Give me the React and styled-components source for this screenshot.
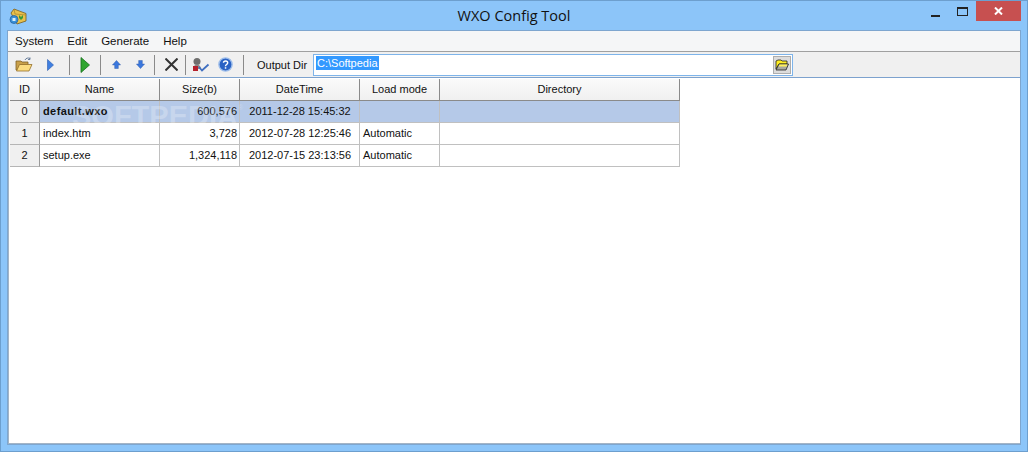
import React from "react";
import styled, { createGlobalStyle } from "styled-components";

const Global = createGlobalStyle`
  html, body { margin: 0; padding: 0; background: #8cc4f8; }
  body { font-family: "Liberation Sans", Arial, sans-serif; font-size: 11px; color: #111; }
`;

const Win = styled.div`
  box-sizing: border-box;
  width: 1028px;
  height: 452px;
  background: #8cc5f9;
  border: 1px solid #6d9fce;
  display: flex;
  flex-direction: column;
  overflow: hidden;
`;

const TitleBar = styled.div`
  height: 29px;
  flex: none;
  display: grid;
  grid-template-columns: 120px 1fr 120px;
  align-items: start;
`;

const AppIcon = styled.div`
  padding: 7px 0 0 8px;
  line-height: 0;
`;

const Title = styled.div`
  font-family: "Open Sans", sans-serif;
  font-size: 14.5px;
  line-height: 30px;
  text-align: center;
  color: #111;
`;

const Controls = styled.div`
  display: flex;
  justify-content: flex-end;
  padding-right: 6px;
`;

const Ctl = styled.div`
  width: ${(p) => (p.$close ? 45 : 27)}px;
  height: 20px;
  background: ${(p) => (p.$close ? "#c75050" : "transparent")};
  display: flex;
  align-items: center;
  justify-content: center;
  line-height: 0;
`;

const MinGlyph = styled.svg`
  margin-top: 8px;
`;

const Client = styled.div`
  flex: 1;
  margin: 0 6px 6px 6px;
  border: 1px solid #7ea6cf;
  background: #f0f0f0;
  display: flex;
  flex-direction: column;
  min-height: 0;
`;

const MenuBar = styled.div`
  height: 20px;
  flex: none;
  background: #f5f6f7;
  border-bottom: 1px solid #a0a0a0;
  display: flex;
  align-items: center;
  padding-left: 7px;
  gap: 14px;
  font-size: 11.5px;
`;

const ToolBar = styled.div`
  height: 25px;
  flex: none;
  background: #f0f0f0;
  display: flex;
  align-items: center;
  padding-left: 4px;
  border-bottom: 1px solid #7da2ce;
`;

const Tool = styled.div`
  width: ${(p) => p.$w || 24}px;
  height: 22px;
  display: flex;
  align-items: center;
  justify-content: center;
  line-height: 0;
  flex: none;
`;

const Sep = styled.div`
  width: 1px;
  height: 20px;
  background: #8a8a8a;
  flex: none;
  margin: 0 ${(p) => p.$r ?? 3}px 0 ${(p) => p.$l ?? 3}px;
`;

const DirLabel = styled.div`
  margin-left: 13px;
  width: 56px;
  flex: none;
`;

const DirBox = styled.div`
  box-sizing: border-box;
  width: 480px;
  height: 22px;
  background: #fff;
  border: 1px solid #7eb4ea;
  display: flex;
  align-items: center;
  justify-content: space-between;
  padding: 0 1px 0 2px;
`;

const Selected = styled.span`
  background: #3399ff;
  color: #fff;
  font-size: 11px;
  line-height: 14px;
  margin-top: -4px;
  padding: 0 1px;
`;

const BrowseBtn = styled.div`
  width: 18px;
  height: 18px;
  background: #dcdcdc;
  border: 1px solid #adadad;
  box-sizing: border-box;
  display: flex;
  align-items: center;
  justify-content: center;
  line-height: 0;
`;

const GridArea = styled.div`
  flex: 1;
  background: #fff;
  position: relative;
  padding: 1px 0 0 1px;
  min-height: 0;
  border-left: 1px solid #a3b4c6;
  border-bottom: 1px solid #a3b4c6;
`;

const Table = styled.div`
  display: grid;
  grid-template-columns: 30px 120px 80px 120px 80px 240px;
  grid-auto-rows: 22px;
  width: 670px;
`;

const Head = styled.div`
  box-sizing: border-box;
  background: linear-gradient(#fafafa, #f0f0f0);
  border-right: 1px solid #8a8a8a;
  border-bottom: 1px solid #8a8a8a;
  display: flex;
  align-items: center;
  justify-content: center;
  padding-bottom: 2px;
`;

const RowHead = styled.div`
  box-sizing: border-box;
  background: #f0f0f0;
  border-right: 1px solid #9a9a9a;
  border-bottom: 1px solid #b5b5b5;
  display: flex;
  align-items: center;
  justify-content: center;
  padding-bottom: 2px;
`;

const aligns = { right: "flex-end", center: "center", left: "flex-start" };

const Cell = styled.div`
  box-sizing: border-box;
  background: ${(p) => (p.$sel ? "#b5c9e8" : "#fff")};
  border-right: 1px solid #c0c0c0;
  border-bottom: 1px solid #c0c0c0;
  display: flex;
  align-items: center;
  justify-content: ${(p) => aligns[p.$align || "left"]};
  padding: 0 2px 2px 3px;
  font-weight: ${(p) => (p.$bold ? 700 : 400)};
  letter-spacing: ${(p) => (p.$bold ? "0.4px" : "0")};
  white-space: nowrap;
`;

const Watermark = styled.div`
  position: absolute;
  left: 63px;
  top: 15px;
  font-weight: 700;
  font-size: 29px;
  line-height: 30px;
  color: rgba(255, 255, 255, 0.26);
  pointer-events: none;
  white-space: nowrap;
`;

const Reg = styled.span`
  font-size: 7px;
  font-weight: 400;
  vertical-align: 16px;
`;

const rows = [
  ["0", "default.wxo", "600,576", "2011-12-28 15:45:32", "", ""],
  ["1", "index.htm", "3,728", "2012-07-28 12:25:46", "Automatic", ""],
  ["2", "setup.exe", "1,324,118", "2012-07-15 23:13:56", "Automatic", ""],
];

const heads = ["ID", "Name", "Size(b)", "DateTime", "Load mode", "Directory"];

const FolderOpen = () => (
  <svg width="18" height="16" viewBox="0 0 18 16">
    <path d="M1 4h5l1 1h6v3H5L3 13H1z" fill="#c9a04a" stroke="#7d5f26" strokeWidth="0.8" />
    <path d="M4.500 7.500H17l-3 6.500H1.500z" fill="#fbdc80" stroke="#94702c" strokeWidth="0.8" />
    <path d="M10 3c1-2 3-2.500 5-1.500M15 0.500v2h-2" fill="none" stroke="#6a7f9c" strokeWidth="1" />
  </svg>
);

const PlayBlue = () => (
  <svg width="7" height="12" viewBox="0 0 7 12">
    <path d="M0.500 0.500L6.500 6L0.500 11.500z" fill="#3f7fe0" stroke="#2a5cb0" strokeWidth="0.6" />
  </svg>
);

const PlayGreen = () => (
  <svg width="10" height="16" viewBox="0 0 10 16">
    <path d="M1 0.500L9.500 8L1 15.500z" fill="#2fa52f" stroke="#14701a" strokeWidth="0.8" />
  </svg>
);

const Arrow = ({ down }) => (
  <svg width="9" height="9" viewBox="0 0 10 10">
    <path
      d={down ? "M3 0.500h4v4h2.500L5 9.500 0.500 4.500H3z" : "M3 9.500h4v-4h2.500L5 0.500 0.500 5.500H3z"}
      fill="#3b78de"
      stroke="#2a58a8"
      strokeWidth="0.5"
    />
  </svg>
);

const Cross = () => (
  <svg width="13" height="13" viewBox="0 0 13 13">
    <path d="M0.500 0.500l12 12M12.500 0.500l-12 12" stroke="#333" strokeWidth="2" />
  </svg>
);

const UserCheck = () => (
  <svg width="18" height="16" viewBox="0 0 18 16">
    <circle cx="5" cy="4.500" r="3.500" fill="#6e6e6e" />
    <path d="M1 12c0-3 2-4.500 4-4.500S9 9 9 12z" fill="#8a8a8a" />
    <rect x="1" y="9" width="5" height="5" fill="#b5202c" />
    <path d="M7 10l3 3.500L16.500 7.500" fill="none" stroke="#3f6fc0" strokeWidth="1.800" />
  </svg>
);

const Help = () => (
  <svg width="15" height="15" viewBox="0 0 15 15">
    <circle cx="7.500" cy="7.500" r="6.600" fill="#2a62c4" stroke="#9dbdea" strokeWidth="1.400" />
    <path d="M5.500 5.800c0-2.400 4.200-2.400 4.200 0 0 1.700-2.200 1.700-2.200 3.400" fill="none" stroke="#fff" strokeWidth="1.400" />
    <rect x="6.800" y="10.200" width="1.500" height="1.500" fill="#fff" />
  </svg>
);

const YellowFolder = () => (
  <svg width="14" height="12" viewBox="0 0 14 12">
    <path d="M1 10V2l2-1h3l1 1h5v3H4z" fill="#ffee20" stroke="#222" strokeWidth="0.8" />
    <path d="M4 5h9.500L11 11H1z" fill="#a8a8a0" stroke="#222" strokeWidth="0.8" />
    <path d="M4.500 5.500h8l-1 2H3.500z" fill="#fff15a" />
  </svg>
);

const TitleIcon = () => (
  <svg width="18" height="17" viewBox="0 0 18 17">
    <path d="M2 5l3-4 4 1.500 8 3V13l-9 3z" fill="#e7c04c" stroke="#7a5c1a" strokeWidth="0.8" />
    <path d="M5 1l1 5 11 1" fill="none" stroke="#a8842c" strokeWidth="0.7" />
    <circle cx="5" cy="11.500" r="4" fill="#3a90d8" stroke="#1e5c9c" strokeWidth="0.7" />
    <path d="M3.500 10h3v3h-3z" fill="#d8eefa" />
    <path d="M10 7l2 2 2-2v3l-2 2-2-2z" fill="#3a9a3a" />
  </svg>
);

export default function App() {
  return (
    <>
      <Global />
      <Win>
        <TitleBar>
          <AppIcon>
            <TitleIcon />
          </AppIcon>
          <Title>WXO Config Tool</Title>
          <Controls>
            <Ctl>
              <MinGlyph width="9" height="3" viewBox="0 0 9 3">
                <rect width="9" height="2" y="1" fill="#222" />
              </MinGlyph>
            </Ctl>
            <Ctl>
              <svg width="11" height="9" viewBox="0 0 11 9">
                <rect x="0.500" y="0.500" width="10" height="8" fill="none" stroke="#222" />
                <rect width="11" height="2" fill="#222" />
              </svg>
            </Ctl>
            <Ctl $close>
              <svg width="9" height="8" viewBox="0 0 9 8">
                <path d="M1 0.500l7 7M8 0.500l-7 7" stroke="#fff" strokeWidth="2" />
              </svg>
            </Ctl>
          </Controls>
        </TitleBar>
        <Client>
          <MenuBar>
            <span>System</span>
            <span>Edit</span>
            <span>Generate</span>
            <span>Help</span>
          </MenuBar>
          <ToolBar>
            <Tool><FolderOpen /></Tool>
            <Tool $w={28}><PlayBlue /></Tool>
            <Sep $l={5} />
            <Tool><PlayGreen /></Tool>
            <Sep />
            <Tool><Arrow /></Tool>
            <Tool><Arrow down /></Tool>
            <Sep $l={2} $r={4} />
            <Tool><Cross /></Tool>
            <Sep $l={2} />
            <Tool><UserCheck /></Tool>
            <Tool><Help /></Tool>
            <Sep $l={6} $r={0} />
            <DirLabel>Output Dir</DirLabel>
            <DirBox>
              <Selected>C:\Softpedia</Selected>
              <BrowseBtn><YellowFolder /></BrowseBtn>
            </DirBox>
          </ToolBar>
          <GridArea>
            <Table>
              {heads.map((h) => <Head key={h}>{h}</Head>)}
              {rows.map((r, i) => (
                <React.Fragment key={r[0]}>
                  <RowHead>{r[0]}</RowHead>
                  <Cell $sel={i === 0} $bold={i === 0}>{r[1]}</Cell>
                  <Cell $sel={i === 0} $align="right">{r[2]}</Cell>
                  <Cell $sel={i === 0} $align="center">{r[3]}</Cell>
                  <Cell $sel={i === 0}>{r[4]}</Cell>
                  <Cell $sel={i === 0}>{r[5]}</Cell>
                </React.Fragment>
              ))}
            </Table>
            <Watermark>SOFTPEDIA<Reg>®</Reg></Watermark>
          </GridArea>
        </Client>
      </Win>
    </>
  );
}
